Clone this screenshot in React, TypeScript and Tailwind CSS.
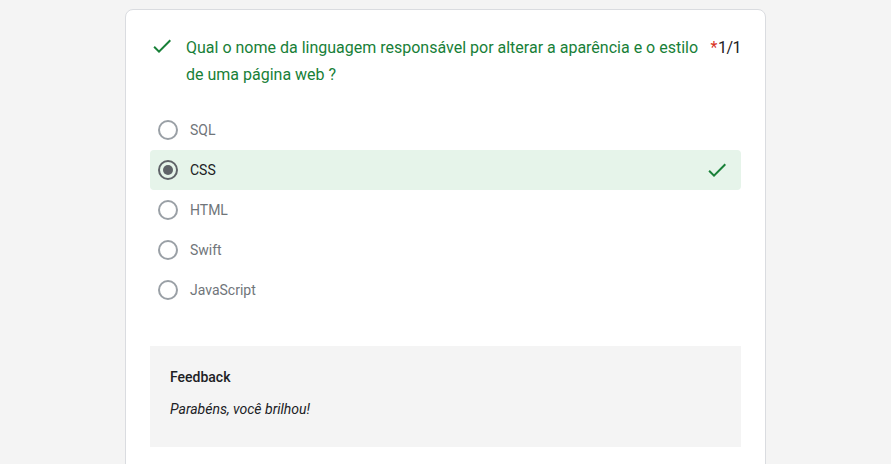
import React from 'react';

const options = ['SQL', 'CSS', 'HTML', 'Swift', 'JavaScript'];
const selected = 'CSS';

function CheckIcon({ className }: { className?: string }) {
  return (
    <svg viewBox="0 0 24 24" className={className} fill="currentColor">
      <path d="M9 16.17 4.83 12l-1.42 1.41L9 19 21 7l-1.41-1.41z" />
    </svg>
  );
}

function Radio({ checked }: { checked: boolean }) {
  return (
    <span
      className={`flex h-5 w-5 shrink-0 items-center justify-center rounded-full border-2 ${
        checked ? 'border-[#5f6368]' : 'border-[#9aa0a6]'
      }`}
    >
      {checked && <span className="h-2.5 w-2.5 rounded-full bg-[#5f6368]" />}
    </span>
  );
}

export default function App() {
  return (
    <div
      className="min-h-[464px] bg-[#f4f4f4] pt-[9px]"
      style={{ fontFamily: 'Roboto, "Liberation Sans", sans-serif' }}
    >
      <div className="mx-auto w-[641px] rounded-lg border border-[#dadce0] bg-white px-6 pb-6 pt-6">
        {/* question header */}
        <div className="flex items-start">
          <CheckIcon className="h-6 w-6 shrink-0 text-[#188038]" />
          <p className="ml-3 flex-1 pr-1 text-base leading-[27px] text-[#188038]">
            Qual o nome da linguagem responsável por alterar a aparência e o estilo de uma página web ?
          </p>
          <div className="text-base leading-[27px] tracking-[-0.5px] text-[#202124]">
            <span className="mr-px text-[#d93025]">*</span>1/1
          </div>
        </div>

        {/* options */}
        <div className="mt-[22px] flex flex-col">
          {options.map((opt) => {
            const isSel = opt === selected;
            return (
              <div
                key={opt}
                className={`flex h-10 items-center rounded pl-2 pr-3 ${isSel ? 'bg-[#e6f4ea]' : ''}`}
              >
                <Radio checked={isSel} />
                <span className={`ml-3 flex-1 text-sm ${isSel ? 'text-[#202124]' : 'text-[#70757a]'}`}>
                  {opt}
                </span>
                {isSel && <CheckIcon className="h-6 w-6 text-[#188038]" />}
              </div>
            );
          })}
        </div>

        {/* feedback */}
        <div className="mt-9 bg-[#f4f4f4] px-5 pb-7 pt-[21px]">
          <div className="text-sm font-medium leading-5 text-[#202124]">Feedback</div>
          <div className="mt-3 text-sm italic leading-5 text-[#202124]">Parabéns, você brilhou!</div>
        </div>
      </div>
    </div>
  );
}
